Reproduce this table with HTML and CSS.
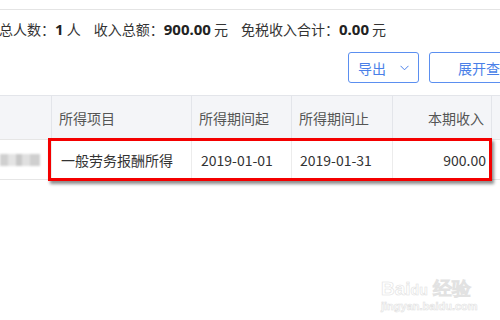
FILE: index.html
```html
<!DOCTYPE html>
<html>
<head>
<meta charset="utf-8">
<link rel="stylesheet" href="styles.css">
</head>
<body>
<div class="page">
  <div class="topline"></div>
  <div class="summary">
    <span class="item">总人数：<b>1</b> 人</span>
    <span class="item">收入总额：<b>900.00</b> 元</span>
    <span class="item">免税收入合计：<b>0.00</b> 元</span>
  </div>
  <div class="actions">
    <button class="btn btn-export">导出<svg class="chev" width="9" height="6" viewBox="0 0 9 6"><path d="M0.5 0.8 L4.5 4.8 L8.5 0.8" fill="none" stroke="#4a80ea" stroke-width="1"/></svg></button>
    <button class="btn btn-expand">展开查询</button>
  </div>
  <div class="table">
    <div class="row head">
      <div class="cell c1"></div>
      <div class="cell c2">所得项目</div>
      <div class="cell c3">所得期间起</div>
      <div class="cell c4">所得期间止</div>
      <div class="cell c5 num">本期收入</div>
      <div class="cell c6"></div>
    </div>
    <div class="row body">
      <div class="cell c1"><span class="blur"></span></div>
      <div class="cell c2">一般劳务报酬所得</div>
      <div class="cell c3">2019-01-01</div>
      <div class="cell c4">2019-01-31</div>
      <div class="cell c5 num">900.00</div>
      <div class="cell c6"></div>
    </div>
    <div class="highlight"></div>
  </div>
  <div class="watermark">
    <div class="wm-logo">Bai<span class="wm-du">du</span> 经验</div>
    <div class="wm-url">jingyan.baidu.com</div>
  </div>
</div>
</body>
</html>
```

FILE: styles.css
```css
html, body {
  margin: 0;
  padding: 0;
  background: #fff;
}
body {
  width: 500px;
  height: 320px;
  overflow: hidden;
  font-family: "Noto Sans CJK SC", "Noto Sans", sans-serif;
  color: #333;
}
.page {
  position: relative;
  width: 500px;
  height: 320px;
  overflow: hidden;
}
.topline {
  height: 1px;
  margin-top: 9px;
  background: #e4e4e4;
}
.summary {
  display: flex;
  height: 38px;
  align-items: center;
  margin-left: -1px;
  font-size: 14px;
  color: #333;
  white-space: nowrap;
}
.summary .item {
  margin-right: 13px;
}
.summary b {
  font-family: "Noto Sans", "Noto Sans CJK SC", sans-serif;
  font-weight: 700;
  font-size: 15px;
  color: #222;
}
.actions {
  display: flex;
  gap: 10px;
  padding-left: 348px;
  margin-top: 4px;
  height: 31px;
  white-space: nowrap;
}
.btn {
  box-sizing: border-box;
  height: 31px;
  border: 1px solid #5b8ff0;
  border-radius: 3px;
  background: #fff;
  color: #4a7fe8;
  font-family: "Noto Sans CJK SC", sans-serif;
  font-size: 14px;
  padding: 0;
  display: flex;
  align-items: center;
  flex-shrink: 0;
}
.btn-export {
  width: 71px;
  padding-left: 9px;
}
.chev {
  margin-left: 14px;
  margin-top: 1px;
}
.btn-expand {
  width: 110px;
  padding-left: 28px;
}
.table {
  position: relative;
  margin-top: 12px;
  width: 520px;
}
.row {
  display: grid;
  grid-template-columns: 52px 140px 100px 101px 99px 28px;
  border-bottom: 1px solid #e6e6e6;
}
.row.head {
  border-top: 1px solid #e3e5ea;
  background: #f4f5f8;
  height: 43px;
  color: #555;
}
.row.body {
  height: 39px;
  color: #333;
}
.cell {
  display: flex;
  align-items: center;
  padding: 0 7px;
  font-size: 14px;
  border-right: 1px solid #e3e5ea;
  white-space: nowrap;
  overflow: hidden;
}
.row.body .cell {
  border-right-color: #ececec;
}
.row.body .c2 {
  padding-left: 9px;
}
.row.body .c3 {
  padding-left: 9px;
}
.row.body .c4 {
  padding-left: 8px;
}
.cell.num {
  justify-content: flex-end;
  padding-right: 5px;
}
.row.head .cell.num {
  padding-right: 7px;
}
.blur {
  display: block;
  width: 40px;
  height: 12px;
  margin-left: -7px;
  background: linear-gradient(90deg, #d0d0d0 0 8px, #e4e4e4 8px 16px, #c8c8c8 16px 22px, #e0e0e0 22px 30px, #cfcfcf 30px 40px);
  filter: blur(1px);
}
.highlight {
  position: absolute;
  left: 48px;
  top: 43px;
  width: 438px;
  height: 37px;
  border: 3.5px solid #f40000;
  box-shadow: 2px 3px 3px rgba(0, 0, 0, 0.45);
}
.watermark {
  position: absolute;
  left: 381px;
  top: 276px;
  color: #fff;
  font-family: "Liberation Sans", sans-serif;
  -webkit-text-stroke: 0.6px #e2e2e2;
}
.wm-logo {
  font-size: 19px;
  font-weight: 700;
}
.wm-du {
  font-size: 14px;
}
.wm-url {
  font-size: 11px;
  font-weight: 700;
  margin-top: -2px;
}
```
